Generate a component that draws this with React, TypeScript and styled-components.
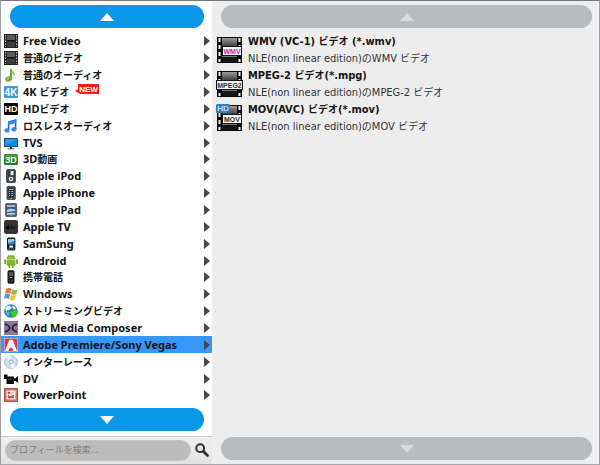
import React, { useState } from 'react';
import styled, { createGlobalStyle } from 'styled-components';

const GlobalStyle = createGlobalStyle`
  * { box-sizing: border-box; }
  body {
    margin: 0;
    background: #ededed;
    color: #151515;
    font: 11px/17px "DejaVu Sans Condensed", "Noto Sans CJK JP", sans-serif;
  }
  button, input { font: inherit; color: inherit; }
`;

const Picker = styled.main`
  display: grid;
  grid-template-columns: minmax(0, 211fr) minmax(0, 387fr);
  min-height: 100vh;
  border: 1px solid #9c9da1;
  border-top: 1px solid #77777b;
  border-bottom-color: #a9a9ab;
`;

const Column = styled.section`
  display: flex;
  flex-direction: column;
  min-width: 0;
`;

const Categories = styled(Column)`
  background: #fdfefd;
`;

const Formats = styled(Column)`
  padding: 4px 5px 4px 4px;
  border-right: 2px solid #f4f4f8;
`;

const ScrollButton = styled.button<{ $muted?: boolean }>`
  display: flex;
  align-items: center;
  justify-content: center;
  height: 23px;
  flex: none;
  margin: ${p => (p.$muted ? '0 0 0 5px' : '4px 8px 4px 9px')};
  padding: 0;
  border: 0;
  border-radius: 12px;
  background: ${p => (p.$muted ? '#bbbcbd' : '#0998e8')};
  color: ${p => (p.$muted ? '#d9dadb' : '#ffffff')};
`;

const CategoryList = styled.ul`
  display: flex;
  flex: 1;
  flex-direction: column;
  margin: 1px 0 0;
  padding: 0;
  list-style: none;
`;

const CategoryItem = styled.li`
  display: flex;
  flex: 1 1 0;
`;

const CategoryButton = styled.button<{ $selected: boolean }>`
  display: flex;
  align-items: center;
  width: 100%;
  padding: 0 2px 0 3px;
  border: 0;
  background: ${p => (p.$selected ? '#3797fb' : 'transparent')};
  font-family: "Noto Sans", "Noto Sans CJK JP", sans-serif;
  font-weight: 700;
  line-height: 16px;
  text-align: left;
  white-space: nowrap;
  svg { flex: none; }
`;

const CategoryName = styled.span`
  margin-left: 5px;
`;

const Kana = styled.span`
  font-family: "Noto Sans CJK JP", sans-serif;
  font-size: 10px;
  line-height: 1;
`;

const Arrow = styled.svg`
  margin-left: auto;
`;

const NewBadge = styled.span`
  align-self: flex-start;
  display: flex;
  height: 11px;
  margin-left: 6px;
`;

const SearchBar = styled.form`
  display: flex;
  align-items: center;
  gap: 4px;
  height: 28px;
  margin-top: 1px;
  padding: 0 3px 1px 4px;
  border-top: 1px solid #c9c9c9;
  background: linear-gradient(#efefef, #e2e2e2);
`;

const SearchInput = styled.input`
  flex: 1;
  min-width: 0;
  height: 21px;
  padding: 0 4px;
  border: 1px solid #c4c4c4;
  border-radius: 11px;
  background: #bcbcbc;
  font-size: 9px;
  &::placeholder { color: #7d7d7d; opacity: 1; }
`;

const SearchButton = styled.button`
  display: flex;
  padding: 0;
  border: 0;
  background: none;
`;

const FormatList = styled.ul`
  display: flex;
  flex: 1;
  flex-direction: column;
  margin: 5px 0 0;
  padding: 0;
  list-style: none;
`;

const FormatButton = styled.button`
  display: flex;
  gap: 5px;
  width: 100%;
  height: 34px;
  padding: 0;
  border: 0;
  background: none;
  text-align: left;
  white-space: nowrap;
`;

const FormatIcon = styled.svg`
  flex: none;
  margin-top: 3px;
`;

const FormatText = styled.span`
  display: flex;
  flex-direction: column;
`;

const FormatTitle = styled.strong`
  font-weight: 700;
`;

const FormatNote = styled.span`
  color: #333;
`;

const film = (
  <>
    <rect width="14" height="14" fill="#202020" />
    <rect x="3" y="1" width="8" height="5" fill="#5a5b5b" />
    <rect x="3" y="7.5" width="8" height="5.5" fill="#3c3d3d" />
    <path d="M1.5 1v12M12.5 1v12" stroke="#aeb2b0" strokeWidth="1.2" strokeDasharray="1.5 1.3" />
    <path d="M3 6.7h8" stroke="#111" />
  </>
);

const iconText = { fontFamily: '"Liberation Sans", sans-serif', textAnchor: 'middle' as const };

const art: Record<string, React.ReactNode> = {
  film,
  note: (
    <>
      <path d="M7 1v9.5" stroke="#4c8d25" strokeWidth="1.6" />
      <ellipse cx="4.6" cy="11" rx="3.5" ry="2.6" fill="#68aa32" transform="rotate(-18 4.6 11)" />
      <path d="M6.3 0c.6 3 5.4 3.2 4.6 8.6-.6-2-2-3.4-4.6-3.6z" fill="#7dbb45" />
      <ellipse cx="4" cy="10.4" rx="1.4" ry=".8" fill="#a5d677" />
    </>
  ),
  k4: (
    <>
      <rect y="1" width="14" height="12" rx="1" fill="#3c9bd8" />
      <text {...iconText} x="7" y="10.8" fontSize="10" fill="#fff">4K</text>
    </>
  ),
  hd: (
    <>
      <rect y="1" width="14" height="12" rx="1" fill="#080808" />
      <text {...iconText} x="7" y="10.3" fontSize="9" fill="#fff">HD</text>
    </>
  ),
  music: (
    <>
      <path d="M4.6 11V3l7-2v9" fill="none" stroke="#1764cc" strokeWidth="1.5" />
      <path d="M4 2.5 12.4.5v3.4L4 5.9z" fill="#2e87ef" />
      <ellipse cx="3" cy="11.4" rx="2.6" ry="2.2" fill="#2e88ed" />
      <ellipse cx="10" cy="10.2" rx="2.6" ry="2.2" fill="#2e88ed" />
    </>
  ),
  tv: (
    <>
      <rect y="2" width="14" height="9" rx=".6" fill="#174f7e" />
      <path d="M1 3h12v7H1z" fill="#259ae9" />
      <path d="M1 9.7 13 3v7H1z" fill="#1785d6" />
      <path d="M6 11h2v1.4h2.5v.9h-7v-.9H6z" fill="#26323b" />
    </>
  ),
  d3: (
    <>
      <rect y="2" width="14" height="11" rx="1.5" fill="#267b1e" />
      <rect x=".7" y="2.6" width="12.6" height="4.6" rx="1" fill="#4b9e3a" />
      <text {...iconText} x="7" y="10.6" fontSize="9" fill="#fff">3D</text>
    </>
  ),
  ipod: (
    <>
      <rect x="2.6" y=".6" width="8.8" height="13" rx="1" fill="#414547" stroke="#202426" strokeWidth=".7" />
      <path d="M4.5 2h5v5h-5z" fill="#30373a" />
      <path d="M6.6 2h2.9v4.2H6.6z" fill="#f3f6f6" />
      <circle cx="7" cy="10" r="2.3" fill="#dfe4e4" />
      <circle cx="7" cy="10" r="1" fill="#464a4c" />
    </>
  ),
  iphone: (
    <>
      <rect x="3" y=".6" width="8.3" height="13" rx="1" fill="#4a5055" stroke="#25282a" strokeWidth=".7" />
      <path d="M4.5 2.2h5.3v9.3H4.5z" fill="#242a30" />
      <path d="M5 3.5h4.3M5 5.5h1.2m1 0h2.1M5 7.5h1.2m1 0h2.1M5 9.5h1.2m1 0h2.1" stroke="#a4b1ba" />
      <circle cx="7.1" cy="12.5" r=".6" fill="#ccc" />
    </>
  ),
  ipad: (
    <>
      <rect x="1.6" y=".5" width="11" height="13" rx="1" fill="#59616a" stroke="#353a40" strokeWidth=".7" />
      <path d="M3 2h8v9.5H3z" fill="#2e5f9a" />
      <path d="M3 2h8v2H3z" fill="#9fb6cd" />
      <path d="m3 7 3-1.4 5 .8v1.7L3 9z" fill="#b7d0e5" />
      <path d="M3 10h8v1.5H3z" fill="#d8dde2" />
      <circle cx="7" cy="12.5" r=".5" fill="#d2d6d9" />
    </>
  ),
  appletv: (
    <>
      <rect width="14" height="14" rx="2.3" fill="#343434" />
      <path d="M3.6 6c1-.8 2 0 2 0-.6.8-.2 1.7.3 2-.6 1.8-1.2 1.5-1.9 1.2-.8.4-1.3.2-1.7-1C1.9 7 2.6 6 3.6 6zm.3-.5c0-.8.4-1.3 1-1.4 0 .8-.4 1.2-1 1.4z" fill="#090909" />
      <text {...iconText} x="9" y="9.2" fontSize="6" fontWeight="bold" fill="#090909">tv</text>
    </>
  ),
  samsung: (
    <>
      <rect x="3" y=".4" width="8.4" height="13.2" rx="1.5" fill="#16242d" />
      <path d="M4 2h6.4v5.5H4z" fill="#278ac2" />
      <path d="M4 2h6.4v2L4 6z" fill="#8bcae5" />
      <rect x="5.3" y="8.5" width="3.8" height="2.3" rx=".7" fill="#dfeaf0" />
      <path d="M4.5 12h1.4m.8 0h1.2m.8 0h1.2" stroke="#8d9aa1" strokeWidth=".8" />
    </>
  ),
  android: (
    <>
      <path d="M2.6 5a4.4 3.8 0 0 1 8.8 0zM2.6 5.6h8.8v5q0 .8-.8.8H3.4q-.8 0-.8-.8z" fill="#83b52d" />
      <path d="m4.2.6 1.2 2.1m4.4-2.1L8.6 2.7" stroke="#6e9d23" strokeWidth=".7" />
      <path d="M1.1 6.2v3m11.8-3v3M5.3 10.7v2.4m3.4-2.4v2.4" stroke="#72a425" strokeWidth="1.8" strokeLinecap="round" />
      <path d="M5.2 3.7h.7m2.3 0h.7" stroke="#fff" strokeWidth=".7" />
    </>
  ),
  phone: (
    <>
      <rect x="3.5" y=".3" width="7" height="13.4" rx="1.7" fill="#171719" />
      <path d="M4.8 2h4.4v4H4.8z" fill="#4d5055" />
      <path d="M5.9 7.5h2.3" stroke="#a8a8a8" />
      <path d="M5 9h.8m.8 0h.8m.8 0H9M5 10.5h.8m.8 0h.8m.8 0H9M5 12h.8m.8 0h.8m.8 0H9" stroke="#555" strokeWidth=".7" />
    </>
  ),
  windows: (
    <>
      <path d="M2.3 1.8q2.8-1.8 5.3.1L6.3 6.7q-2.6-1.5-5.2-.2z" fill="#e7793a" />
      <path d="M8.2 2.3q2.6 1.6 5.5.3l-1.5 4.7q-2.7 1-5.2-.3z" fill="#91ba3f" />
      <path d="M1 7.2q2.7-1.3 5.1.2L4.8 12.1q-2.4-1.6-4.8-.3z" fill="#4a9ddb" />
      <path d="M6.8 7.7q2.5 1.4 5.2.4l-1.4 4.7q-2.5 1.3-5.1-.4z" fill="#f2c343" />
    </>
  ),
  stream: (
    <>
      <circle cx="6.8" cy="7" r="6.7" fill="#277ec5" />
      <path d="M1 4Q3 1 6.4 1.7L8 4 5.2 6.3 3 6 2.3 8zM8 1.2 11.5 3v3L9 5z" fill="#d5edf3" />
      <path d="M2.2 7.4 5.6 8l-1 4.4Q2 11 2.2 7.4z" fill="#56b4dc" />
      <path d="M6 7.2q3 .3 4.7-1.6Q12 7 13.5 7q0 5-4 6.6Q6 12 6 7.2z" fill="#38d02d" stroke="#228425" strokeWidth=".5" />
    </>
  ),
  avid: (
    <>
      <rect width="14" height="14" fill="#87779b" />
      <path d="M1 3.3Q5.6 4.5 5.6 7T1 10.8M13 3.3Q8.4 4.5 8.4 7t4.6 3.8" fill="none" stroke="#241e2b" strokeWidth="1.6" />
    </>
  ),
  adobe: (
    <>
      <rect width="14" height="14" fill="#eee" />
      <path d="M.5.5h13v13H.5z" fill="#d23b46" />
      <path d="M5.3 1.7h3.3L13 13H9.5L8 9.7H5.8l1.5-3.6-3 6.9H1z" fill="#fff" />
    </>
  ),
  disc: (
    <>
      <circle cx="7" cy="7" r="6.4" fill="#cde0ec" stroke="#90aabd" strokeWidth=".7" />
      <path d="M7 7 2.2 2.5Q4.5.3 7 .8zM7 7l4.8 4.6Q9.8 13.5 7 13.2z" fill="#f6fbfd" />
      <path d="m5.2 3.7 4.9 3-4.7 3z" fill="#9dbfd6" />
      <circle cx="7" cy="7" r="1.8" fill="#eaf6fc" stroke="#88a9be" strokeWidth=".6" />
    </>
  ),
  camera: (
    <>
      <path d="M0 2.5h3.5v2H10v2l1.5-.3L14 4v7l-2.5-2H10v3H2.5V7H0z" fill="#050505" />
      <path d="M4 7.2h3.6" stroke="#777" strokeWidth=".8" />
    </>
  ),
  powerpoint: (
    <>
      <rect x=".6" y=".6" width="12.8" height="12.8" fill="#d8776c" stroke="#a3463d" />
      <rect x="2.6" y="2.6" width="8.8" height="8.8" fill="#faf0ed" />
      <path d="M4 4h2v1.6H4zM7 6.3l2.5-2.5M4.2 10V7.5l2 1L9.6 7v3z" fill="#c65348" stroke="#b94c40" strokeWidth=".6" />
    </>
  ),
};

const categories: { name: string; icon: string; isNew?: boolean }[] = [
  { name: 'Free Video', icon: 'film' },
  { name: '普通のビデオ', icon: 'film' },
  { name: '普通のオーディオ', icon: 'note' },
  { name: '4K ビデオ', icon: 'k4', isNew: true },
  { name: 'HDビデオ', icon: 'hd' },
  { name: 'ロスレスオーディオ', icon: 'music' },
  { name: 'TVS', icon: 'tv' },
  { name: '3D動画', icon: 'd3' },
  { name: 'Apple iPod', icon: 'ipod' },
  { name: 'Apple iPhone', icon: 'iphone' },
  { name: 'Apple iPad', icon: 'ipad' },
  { name: 'Apple TV', icon: 'appletv' },
  { name: 'SamSung', icon: 'samsung' },
  { name: 'Android', icon: 'android' },
  { name: '携帯電話', icon: 'phone' },
  { name: 'Windows', icon: 'windows' },
  { name: 'ストリーミングビデオ', icon: 'stream' },
  { name: 'Avid Media Composer', icon: 'avid' },
  { name: 'Adobe Premiere/Sony Vegas', icon: 'adobe' },
  { name: 'インターレース', icon: 'disc' },
  { name: 'DV', icon: 'camera' },
  { name: 'PowerPoint', icon: 'powerpoint' },
];

const formats = [
  { tag: 'WMV', title: 'WMV (VC-1) ビデオ (*.wmv)', note: 'NLE(non linear edition)のWMV ビデオ' },
  { tag: 'MPEG2', title: 'MPEG-2 ビデオ(*.mpg)', note: 'NLE(non linear edition)のMPEG-2 ビデオ' },
  { tag: 'MOV', title: 'MOV(AVC) ビデオ(*.mov)', note: 'NLE(non linear edition)のMOV ビデオ' },
];

// Sets Japanese runs one size smaller than the Latin text around them.
function MixedText({ text }: { text: string }) {
  return (
    <>
      {text.split(/([\u3000-\u9fff]+)/).map((run, i) => (i % 2 ? <Kana key={i}>{run}</Kana> : run))}
    </>
  );
}

function Triangle({ down }: { down?: boolean }) {
  return (
    <svg width="14" height="8" viewBox="0 0 14 8" aria-hidden="true">
      <path d={down ? 'M0 0h14L7 8z' : 'M0 8h14L7 0z'} fill="currentColor" />
    </svg>
  );
}

function FormatArt({ tag }: { tag: string }) {
  const wide = tag === 'MPEG2';
  const pink = tag === 'WMV';
  return (
    <FormatIcon width="27" height="28" viewBox="0 0 27 28" aria-hidden="true">
      <defs>
        <linearGradient id={'frame' + tag} x2="0" y2="1">
          <stop stopColor="#9a9a9a" />
          <stop offset="1" stopColor="#404040" />
        </linearGradient>
      </defs>
      <path d="M1 1h25v26H1z" fill="#080808" />
      <path d="M6 2h15v8H6z" fill={`url(#frame${tag})`} />
      <path d="M6 21h15v5H6z" fill="#151515" />
      <path d="M6 20.5h15" stroke="#777" />
      <path d="M3.5 2v24M23.5 2v24" stroke="#f4f4f4" strokeWidth="2" strokeDasharray="4 3" />
      <rect x={wide ? 0.5 : 6.5} y="10.5" width={wide ? 26 : 19} height="9" fill="#f8f8f8" stroke="#171717" />
      <text
        {...iconText}
        x={wide ? 13.5 : 16}
        y="18"
        fontSize="7"
        fontWeight="bold"
        fill={pink ? '#c22aa5' : '#303030'}
      >
        {tag}
      </text>
      {tag === 'MOV' && (
        <>
          <rect width="14" height="9" rx="1.5" fill="#2583bd" />
          <text {...iconText} x="7" y="7.2" fontSize="8" fill="#fff">HD</text>
        </>
      )}
    </FormatIcon>
  );
}

export default function App() {
  const [selected, setSelected] = useState('Adobe Premiere/Sony Vegas');
  const [query, setQuery] = useState('');
  return (
    <>
      <GlobalStyle />
      <Picker>
        <Categories>
          <ScrollButton aria-label="Scroll categories up"><Triangle /></ScrollButton>
          <CategoryList>
            {categories.map(c => (
              <CategoryItem key={c.name}>
                <CategoryButton $selected={c.name === selected} aria-pressed={c.name === selected} onClick={() => setSelected(c.name)}>
                  <svg width="14" height="14" viewBox="0 0 14 14" aria-hidden="true">{art[c.icon]}</svg>
                  <CategoryName><MixedText text={c.name} /></CategoryName>
                  {c.isNew && (
                    <NewBadge>
                      <svg width="24" height="11" viewBox="0 0 24 11" role="img" aria-label="New">
                        <path d="M3 0h21v10H5L0 7l3-2z" fill="#f41d1b" />
                        <text {...iconText} x="13.5" y="8" fontSize="8" fontWeight="bold" fill="#fff">NEW</text>
                      </svg>
                    </NewBadge>
                  )}
                  <Arrow width="6" height="10" viewBox="0 0 6 10" aria-hidden="true">
                    <path d="M0 0 6 5 0 10z" fill="#484848" />
                  </Arrow>
                </CategoryButton>
              </CategoryItem>
            ))}
          </CategoryList>
          <ScrollButton aria-label="Scroll categories down"><Triangle down /></ScrollButton>
          <SearchBar onSubmit={e => e.preventDefault()}>
            <SearchInput type="text" aria-label="プロフィールを検索" placeholder="プロフィールを検索..." value={query} onChange={e => setQuery(e.target.value)} />
            <SearchButton type="submit" aria-label="検索">
              <svg width="14" height="14" viewBox="0 0 14 14" aria-hidden="true">
                <circle cx="5.2" cy="5.2" r="3.9" fill="none" stroke="#303030" strokeWidth="2" />
                <path d="m8.5 8.5 4 4" stroke="#303030" strokeWidth="2.6" strokeLinecap="round" />
              </svg>
            </SearchButton>
          </SearchBar>
        </Categories>
        <Formats>
          <ScrollButton $muted aria-label="Scroll formats up"><Triangle /></ScrollButton>
          <FormatList>
            {formats.map(f => (
              <li key={f.tag}>
                <FormatButton>
                  <FormatArt tag={f.tag} />
                  <FormatText>
                    <FormatTitle><MixedText text={f.title} /></FormatTitle>
                    <FormatNote><MixedText text={f.note} /></FormatNote>
                  </FormatText>
                </FormatButton>
              </li>
            ))}
          </FormatList>
          <ScrollButton $muted aria-label="Scroll formats down"><Triangle down /></ScrollButton>
        </Formats>
      </Picker>
    </>
  );
}
